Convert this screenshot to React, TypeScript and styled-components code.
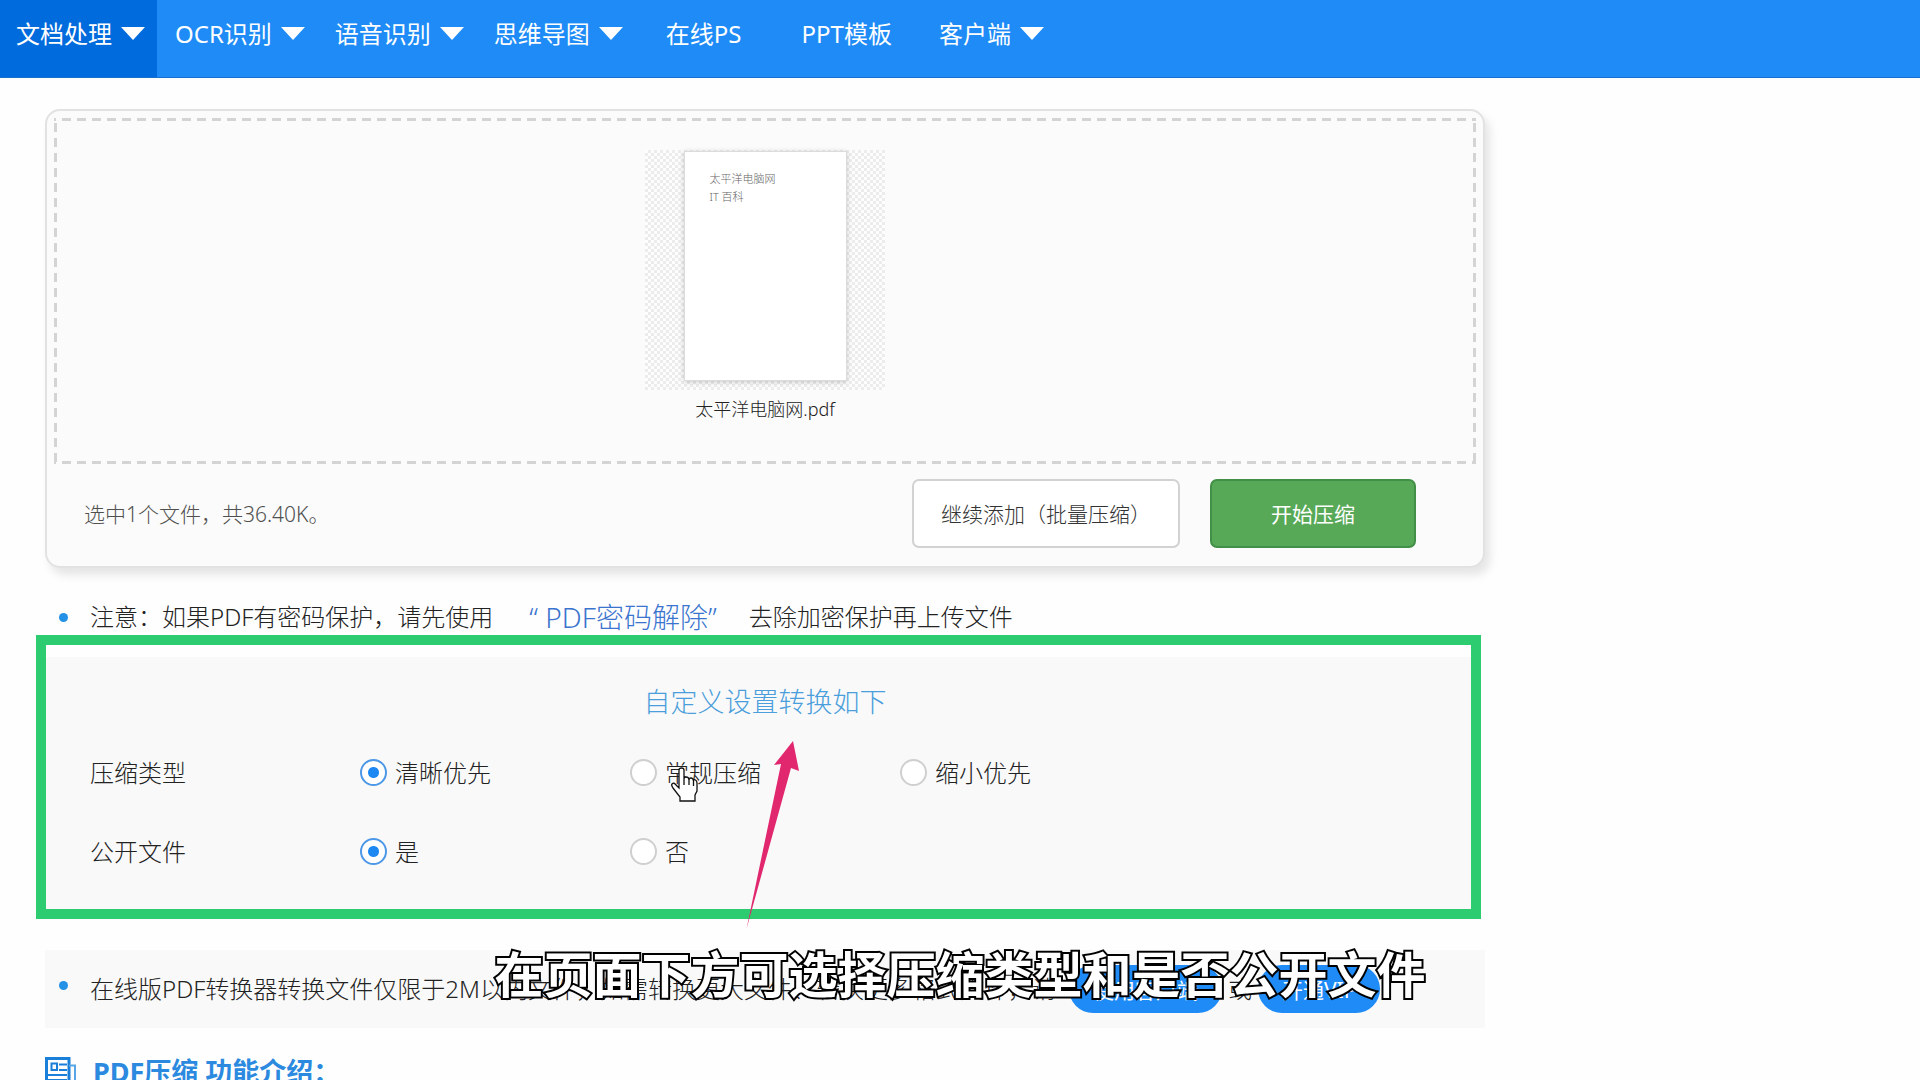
import React from 'react';
import styled, { createGlobalStyle, css } from 'styled-components';

const GlobalStyle = createGlobalStyle`
  *, *::before, *::after { box-sizing: border-box; }
  body {
    margin: 0;
    background: #fefefe;
    color: #222;
    font-family: 'Noto Sans', 'Noto Sans CJK SC', sans-serif;
    font-size: 24px;
    font-weight: 300;
    line-height: 36px;
  }
  a { color: inherit; text-decoration: none; }
  p, h2 { margin: 0; }
`;

const Page = styled.div`
  position: relative;
  height: 100vh;
  overflow: hidden;
`;

const NavBar = styled.nav`
  display: flex;
  gap: 2px;
  height: 78px;
  background: #1e8bf7;
  border-bottom: 1px solid #1670cc;
`;

const NavLink = styled.a<{ $active?: boolean; $menu?: boolean }>`
  display: flex;
  align-items: center;
  gap: 9px;
  padding: ${(p) => (p.$menu ? '0 12px 10px 16px' : '0 29px 10px')};
  background: ${(p) => (p.$active ? '#006bdc' : 'transparent')};
  color: #fff;
  font-weight: 400;
  white-space: nowrap;
`;

const Caret = styled.span`
  border: 12px solid transparent;
  border-top: 13px solid #fff;
  border-bottom: 0;
`;

const Main = styled.main`
  width: 75%;
  margin: 31px 0 0 45px;
`;

const UploadCard = styled.section`
  padding: 7px;
  background: #fbfbfb;
  border: 2px solid #e2e2e2;
  border-radius: 15px;
  box-shadow: 5px 7px 10px rgba(0, 0, 0, 0.1);
`;

const DropZone = styled.div`
  display: flex;
  flex-direction: column;
  align-items: center;
  padding: 32px 0 36px;
  --h: linear-gradient(90deg, #d4d4d4 9px, transparent 9px);
  --v: linear-gradient(#d4d4d4 9px, transparent 9px);
  background:
    var(--h) 8px 0 / 15px 3px repeat-x,
    var(--h) 8px 100% / 15px 3px repeat-x,
    var(--v) 0 5px / 3px 15px repeat-y,
    var(--v) 100% 5px / 3px 15px repeat-y;
`;

const Thumb = styled.div`
  display: flex;
  justify-content: center;
  width: 240px;
  height: 240px;
  padding: 1px 0 9px;
  background: repeating-conic-gradient(#ececec 0 25%, #fdfdfd 0 50%) 0 0 / 6px 6px;
`;

const Sheet = styled.div`
  width: 163px;
  padding: 18px 0 0 25px;
  background: #fff;
  border: 1px solid #dcdcdc;
  box-shadow: 0 1px 5px rgba(0, 0, 0, 0.2);
  color: #666;
  font-size: 11px;
  line-height: 18px;
`;

const FileName = styled.p`
  line-height: 38px;
  font-size: 18px;
`;

const UploadFooter = styled.div`
  display: flex;
  align-items: center;
  gap: 30px;
  padding: 15px 60px 11px 30px;
`;

const Summary = styled.p`
  flex: 1;
  color: #505050;
  font-size: 21px;
`;

const ActionButton = styled.button<{ $primary?: boolean }>`
  min-width: 206px;
  height: 69px;
  padding: 0 27px;
  background: #fff;
  border: 2px solid #d2d2d2;
  border-radius: 7px;
  color: #333;
  font: inherit;
  font-size: 21px;
  ${(p) =>
    p.$primary &&
    css`
      background: #57a957;
      border-color: #429047;
      color: #fff;
      font-weight: 400;
    `}
`;

const Note = styled.p`
  display: flex;
  align-items: center;
  margin-top: 31px;
  padding-left: 14px;
  white-space: nowrap;
`;

const Bullet = styled.span<{ $raised?: boolean }>`
  flex: none;
  width: 9px;
  height: 9px;
  margin: 0 22px ${(p) => (p.$raised ? '8px' : '0')} 0;
  border-radius: 50%;
  background: #2291e6;
`;

const UnlockLink = styled.a`
  margin: 0 32px 0 36px;
  color: #3a74cf;
  font-size: 28px;
`;

const Settings = styled.section`
  position: relative;
  margin: 22px 14px 0 0;
  padding: 27px 0 18px 45px;
  background: #f9f9f9;
`;

const Highlight = styled.div`
  position: absolute;
  inset: -22px -10px -10px -9px;
  border: 10px solid #2ecc71;
  pointer-events: none;
`;

const SettingsTitle = styled.h2`
  margin: 0 31px 13px 0;
  color: #4a9edb;
  font-size: 27px;
  font-weight: 300;
  text-align: center;
`;

const OptionRow = styled.div`
  display: grid;
  grid-template-columns: repeat(4, 270px);
  align-items: center;
  height: 79px;
`;

const Option = styled.label`
  display: flex;
  align-items: center;
  gap: 8px;
`;

const Radio = styled.input`
  appearance: none;
  width: 27px;
  height: 27px;
  margin: 0;
  background: #fff;
  border: 2px solid #cfcfcf;
  border-radius: 50%;
  &:checked {
    background: radial-gradient(circle, #1e88f2 5px, #fff 6px);
    border-color: #4c98e6;
  }
`;

const Arrow = styled.svg`
  position: absolute;
  left: 701px;
  top: 84px;
  z-index: 2;
`;

const Cursor = styled.svg`
  position: absolute;
  left: 625px;
  top: 109px;
`;

const Limit = styled.section`
  display: flex;
  align-items: center;
  height: 78px;
  margin-top: 41px;
  padding-left: 14px;
  background: #f9f9f9;
  white-space: nowrap;
`;

const LimitText = styled.span`
  margin-right: 7px;
`;

const Pill = styled.a`
  height: 48px;
  margin: 0 6px;
  padding: 0 24px;
  border-radius: 24px;
  background: #1e8bf7;
  color: #fff;
  font-size: 21px;
  font-weight: 400;
  line-height: 50px;
`;

const IntroTitle = styled.h2`
  display: flex;
  align-items: center;
  gap: 16px;
  margin-top: 26px;
  color: #2b8ae0;
  font-size: 27px;
  font-weight: 700;
`;

const Subtitle = styled.p`
  position: absolute;
  left: 0;
  right: 0;
  bottom: 70px;
  color: #fff;
  font-size: 49px;
  font-weight: 700;
  line-height: 72px;
  text-align: center;
  -webkit-text-stroke: 4px #000;
  paint-order: stroke fill;
  pointer-events: none;
`;

const NAV = [
  { label: '文档处理', menu: true, active: true },
  { label: 'OCR识别', menu: true },
  { label: '语音识别', menu: true },
  { label: '思维导图', menu: true },
  { label: '在线PS' },
  { label: 'PPT模板' },
  { label: '客户端', menu: true },
];

const GROUPS = [
  { id: 'type', label: '压缩类型', options: ['清晰优先', '常规压缩', '缩小优先'] },
  { id: 'public', label: '公开文件', options: ['是', '否'] },
];

export default function App() {
  return (
    <Page>
      <GlobalStyle />
      <NavBar>
        {NAV.map((item) => (
          <NavLink key={item.label} href="#" $active={item.active} $menu={item.menu}>
            {item.label}
            {item.menu && <Caret />}
          </NavLink>
        ))}
      </NavBar>

      <Main>
        <UploadCard>
          <DropZone>
            <Thumb>
              <Sheet>
                太平洋电脑网
                <br />
                IT 百科
              </Sheet>
            </Thumb>
            <FileName>太平洋电脑网.pdf</FileName>
          </DropZone>
          <UploadFooter>
            <Summary>选中1个文件，共36.40K。</Summary>
            <ActionButton type="button">继续添加（批量压缩）</ActionButton>
            <ActionButton type="button" $primary>
              开始压缩
            </ActionButton>
          </UploadFooter>
        </UploadCard>

        <Note>
          <Bullet />
          注意：如果PDF有密码保护，请先使用
          <UnlockLink href="#">“ PDF密码解除”</UnlockLink>
          去除加密保护再上传文件
        </Note>

        <Settings>
          <SettingsTitle>自定义设置转换如下</SettingsTitle>
          {GROUPS.map((group) => (
            <OptionRow key={group.id} role="radiogroup" aria-labelledby={group.id}>
              <span id={group.id}>{group.label}</span>
              {group.options.map((option, i) => (
                <Option key={option}>
                  <Radio type="radio" name={group.id} defaultChecked={i === 0} />
                  {option}
                </Option>
              ))}
            </OptionRow>
          ))}
          <Highlight />
          <Cursor width="29" height="37" viewBox="0 0 29 37" aria-hidden="true">
            <path
              d="M9 4Q9 2 11.500 2Q14 2 14 4V13Q14 11 16 11Q19 11 19 14Q19 12 21 12Q23 12 23.500 15Q24 13 25.500 14Q27 15 27 17V25L25 29V35H10V31L3 22Q1 19 2 18Q4 16 6 19L9 22Z"
              fill="#fff"
              stroke="#111"
              strokeWidth="1.300"
            />
            <path d="M14 13V19M19 14V19M23.500 15V20" stroke="#111" strokeWidth="1.300" />
          </Cursor>
          <Arrow width="54" height="190" viewBox="0 0 54 190" aria-hidden="true">
            <path d="M47 0L53 30L45 27L0.500 188L35 23L28 24Z" fill="#e1286f" />
          </Arrow>
        </Settings>

        <Limit>
          <Bullet $raised />
          <LimitText>
            在线版PDF转换器转换文件仅限于2M以内文件，如需转换更大文件、转换更多格式文件，请
          </LimitText>
          <Pill href="#">使用客户端</Pill>
          或
          <Pill href="#">开通VIP</Pill>
        </Limit>

        <IntroTitle>
          <svg width="32" height="30" viewBox="0 0 32 30" fill="none" aria-hidden="true">
            <path d="M1.500 1.500H24V28H1.500Z" stroke="#1a7fd8" strokeWidth="3" />
            <path d="M24 8.500H30V28H24" stroke="#5aa5e6" strokeWidth="2" />
            <path d="M6.500 6.500H12V13H6.500Z" stroke="#1a7fd8" strokeWidth="2" />
            <path d="M14 7.500H22M14 13H22M3 18H22M3 23H22" stroke="#1a7fd8" strokeWidth="2" />
          </svg>
          PDF压缩 功能介绍：
        </IntroTitle>
      </Main>

      <Subtitle>在页面下方可选择压缩类型和是否公开文件</Subtitle>
    </Page>
  );
}
